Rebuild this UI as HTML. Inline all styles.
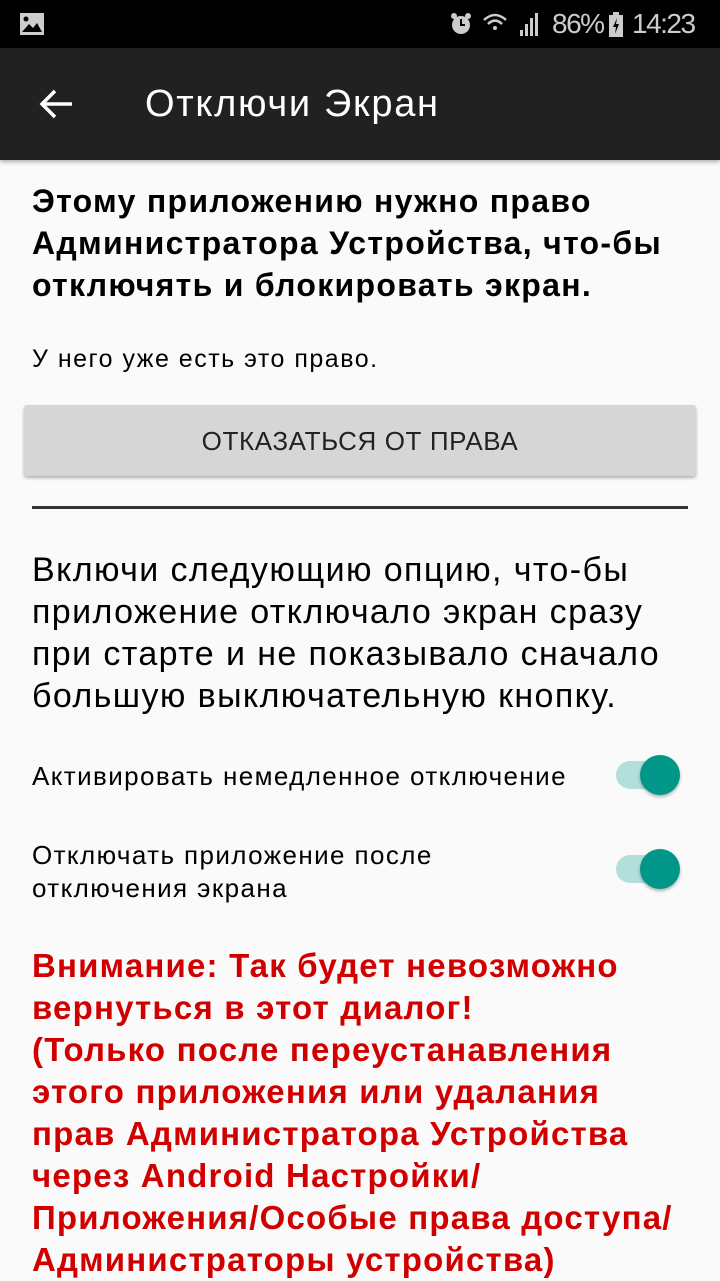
<!DOCTYPE html>
<html><head><meta charset="utf-8"><style>
*{margin:0;padding:0;box-sizing:border-box}
body{width:720px;height:1280px;overflow:hidden;background:#fafafa;font-family:"Liberation Sans",sans-serif;position:relative}
.sb{position:absolute;top:0;left:0;width:720px;height:48px;background:#000;color:#ddd}
.ab{position:absolute;top:48px;left:0;width:720px;height:112px;background:#212121;box-shadow:0 2px 4px rgba(0,0,0,.3)}
.t{position:absolute;left:32px;color:#000;white-space:nowrap}
.sw{position:absolute;left:616px;width:64px;height:28px}
.sw .tr{position:absolute;left:0;top:0;width:60px;height:28px;border-radius:14px;background:#b2dfdb}
.sw .th{position:absolute;left:24px;top:-6px;width:40px;height:40px;border-radius:50%;background:#009688;box-shadow:0 2px 3px rgba(0,0,0,.3)}
.r{color:#d10000;font-weight:bold;font-size:33px;letter-spacing:1.2px;line-height:42px;top:945px}
</style></head><body>
<div class="sb">
<svg style="position:absolute;left:19px;top:12px" width="26" height="24"><rect x="1" y="1" width="24" height="22" fill="#ccc"/><circle cx="7" cy="7" r="2.5" fill="#000"/><path d="M3 20 L10 12 L14 16 L18 11 L23 20Z" fill="#000"/></svg>
<svg style="position:absolute;left:448px;top:11px" width="26" height="26"><circle cx="13" cy="14" r="9" fill="#ccc"/><circle cx="6" cy="5" r="3" fill="#ccc"/><circle cx="20" cy="5" r="3" fill="#ccc"/><path d="M13 8 V14 H17" stroke="#000" stroke-width="2" fill="none"/></svg>
<svg style="position:absolute;left:482px;top:12px" width="60" height="26"><path d="M2 8 Q13 -2 24 8" stroke="#ccc" stroke-width="2.5" fill="none"/><path d="M6 12 Q13 5 20 12" stroke="#ccc" stroke-width="2.5" fill="none"/><circle cx="13" cy="16" r="2" fill="#ccc"/><rect x="38" y="18" width="3" height="6" fill="#ccc"/><rect x="43" y="12" width="3" height="12" fill="#ccc"/><rect x="48" y="6" width="3" height="18" fill="#ccc"/><rect x="53" y="1" width="3" height="23" fill="#ccc"/></svg>
<div style="position:absolute;left:552px;top:8px;font-size:28px;letter-spacing:-1.5px;color:#ccc">86%</div>
<svg style="position:absolute;left:609px;top:12px" width="14" height="26"><rect x="0" y="3" width="14" height="22" fill="#ccc"/><rect x="4" y="0" width="6" height="3" fill="#ccc"/><path d="M8 6 L4 15 L7 15 L6 22 L10 12 L7 12Z" fill="#000"/></svg>
<div style="position:absolute;left:632px;top:8px;font-size:28px;letter-spacing:-1.5px;color:#ccc">14:23</div>
</div>
<div class="ab">
<svg style="position:absolute;left:38px;top:38px" width="36" height="36"><path d="M34 18 H4 M17 5 L4 18 L17 31" stroke="#fff" stroke-width="3.5" fill="none"/></svg>
<div style="position:absolute;left:145px;top:35px;color:#fff;font-size:38px;letter-spacing:1.7px">Отключи Экран</div>
</div>
<div class="t" style="top:180px;font-size:32px;letter-spacing:1.3px;font-weight:bold;line-height:42px">Этому приложению нужно право<br>Администратора Устройства, что-бы<br>отключять и блокировать экран.</div>
<div class="t" style="top:345px;font-size:25px;letter-spacing:1.5px">У него уже есть это право.</div>
<div style="position:absolute;left:24px;top:405px;width:672px;height:71px;background:#d6d6d6;border-radius:3px;box-shadow:0 2px 3px rgba(0,0,0,.3);text-align:center;line-height:73px;font-size:26px;letter-spacing:.6px;color:#222">ОТКАЗАТЬСЯ ОТ ПРАВА</div>
<div style="position:absolute;left:32px;top:506px;width:656px;height:3px;background:#333"></div>
<div class="t" style="top:549px;font-size:34px;letter-spacing:1.4px;line-height:42px">Включи следующию опцию, что-бы<br>приложение отключало экран сразу<br>при старте и не показывало сначало<br>большую выключательную кнопку.</div>
<div class="t" style="top:761px;font-size:26px;letter-spacing:1.4px">Активировать немедленное отключение</div>
<div class="sw" style="top:761px"><div class="tr"></div><div class="th"></div></div>
<div class="t" style="top:839px;font-size:26px;letter-spacing:1.4px;line-height:33px">Отключать приложение после<br>отключения экрана</div>
<div class="sw" style="top:855px"><div class="tr"></div><div class="th"></div></div>
<div class="t r">Внимание: Так будет невозможно<br>вернуться в этот диалог!<br>(Только после переустанавления<br>этого приложения или удалания<br>прав Администратора Устройства<br>через Android Настройки/<br>Приложения/Особые права доступа/<br>Администраторы устройства)</div>
</body></html>
